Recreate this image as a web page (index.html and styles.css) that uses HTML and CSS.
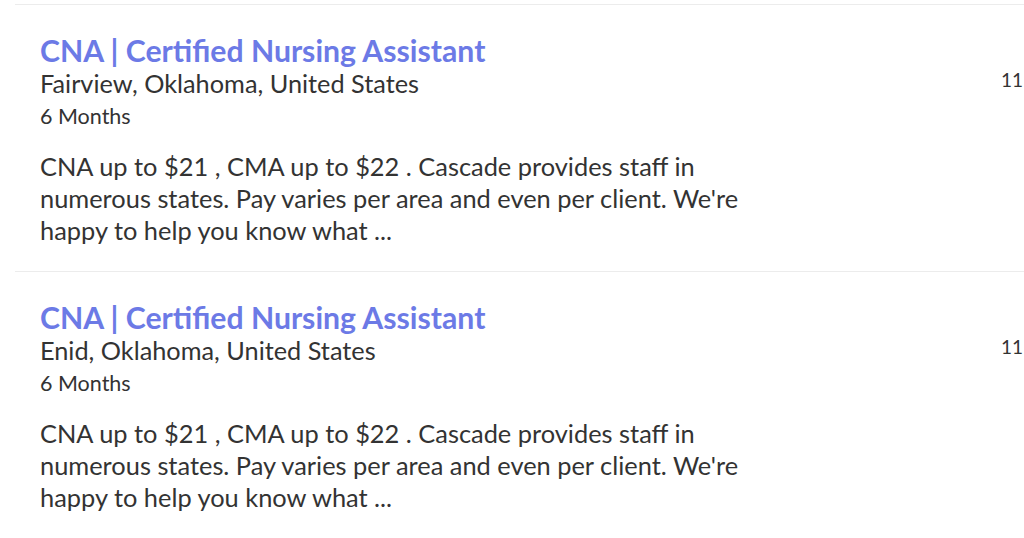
FILE: index.html
```html
<!DOCTYPE html>
<html>
<head>
<meta charset="utf-8">
<link rel="stylesheet" href="styles.css">
</head>
<body>
<div class="list">
  <div class="job">
    <div class="main">
      <a class="title" href="#">CNA | Certified Nursing Assistant</a>
      <div class="loc">Fairview, Oklahoma, United States</div>
      <div class="dur">6 Months</div>
      <p class="desc">CNA up to $21 , CMA up to $22 . Cascade provides staff in numerous states. Pay varies per area and even per client. We're happy to help you know what ...</p>
    </div>
    <div class="date">11 days ago</div>
  </div>
  <div class="job">
    <div class="main">
      <a class="title" href="#">CNA | Certified Nursing Assistant</a>
      <div class="loc">Enid, Oklahoma, United States</div>
      <div class="dur">6 Months</div>
      <p class="desc">CNA up to $21 , CMA up to $22 . Cascade provides staff in numerous states. Pay varies per area and even per client. We're happy to help you know what ...</p>
    </div>
    <div class="date">11 days ago</div>
  </div>
</div>
</body>
</html>
```
FILE: styles.css
```css
html, body { margin: 0; padding: 0; background: #fff; overflow: hidden; }
body { font-family: Lato, "Open Sans", sans-serif; color: #333; width: 1024px; height: 538px; }
.list { margin-left: 15px; padding-top: 4px; width: 1200px; }
.job { display: flex; border-top: 1px solid #ececec; padding: 28px 0 25px 25px; }
.main { width: 730px; display: flex; flex-direction: column; }
.title { color: #6c7ae6; font-size: 30.2px; font-weight: 700; text-decoration: none; line-height: 34px; }
.loc { font-size: 25.3px; line-height: 32px; color: #333; }
.dur { font-size: 21.5px; line-height: 34px; color: #333; }
.desc { margin: 17px 0 0; font-size: 25.4px; line-height: 32px; color: #333; width: 730px; }
.date { margin-left: 231px; margin-top: 36px; font-size: 19px; line-height: 1.2; color: #333; white-space: nowrap; }
```
